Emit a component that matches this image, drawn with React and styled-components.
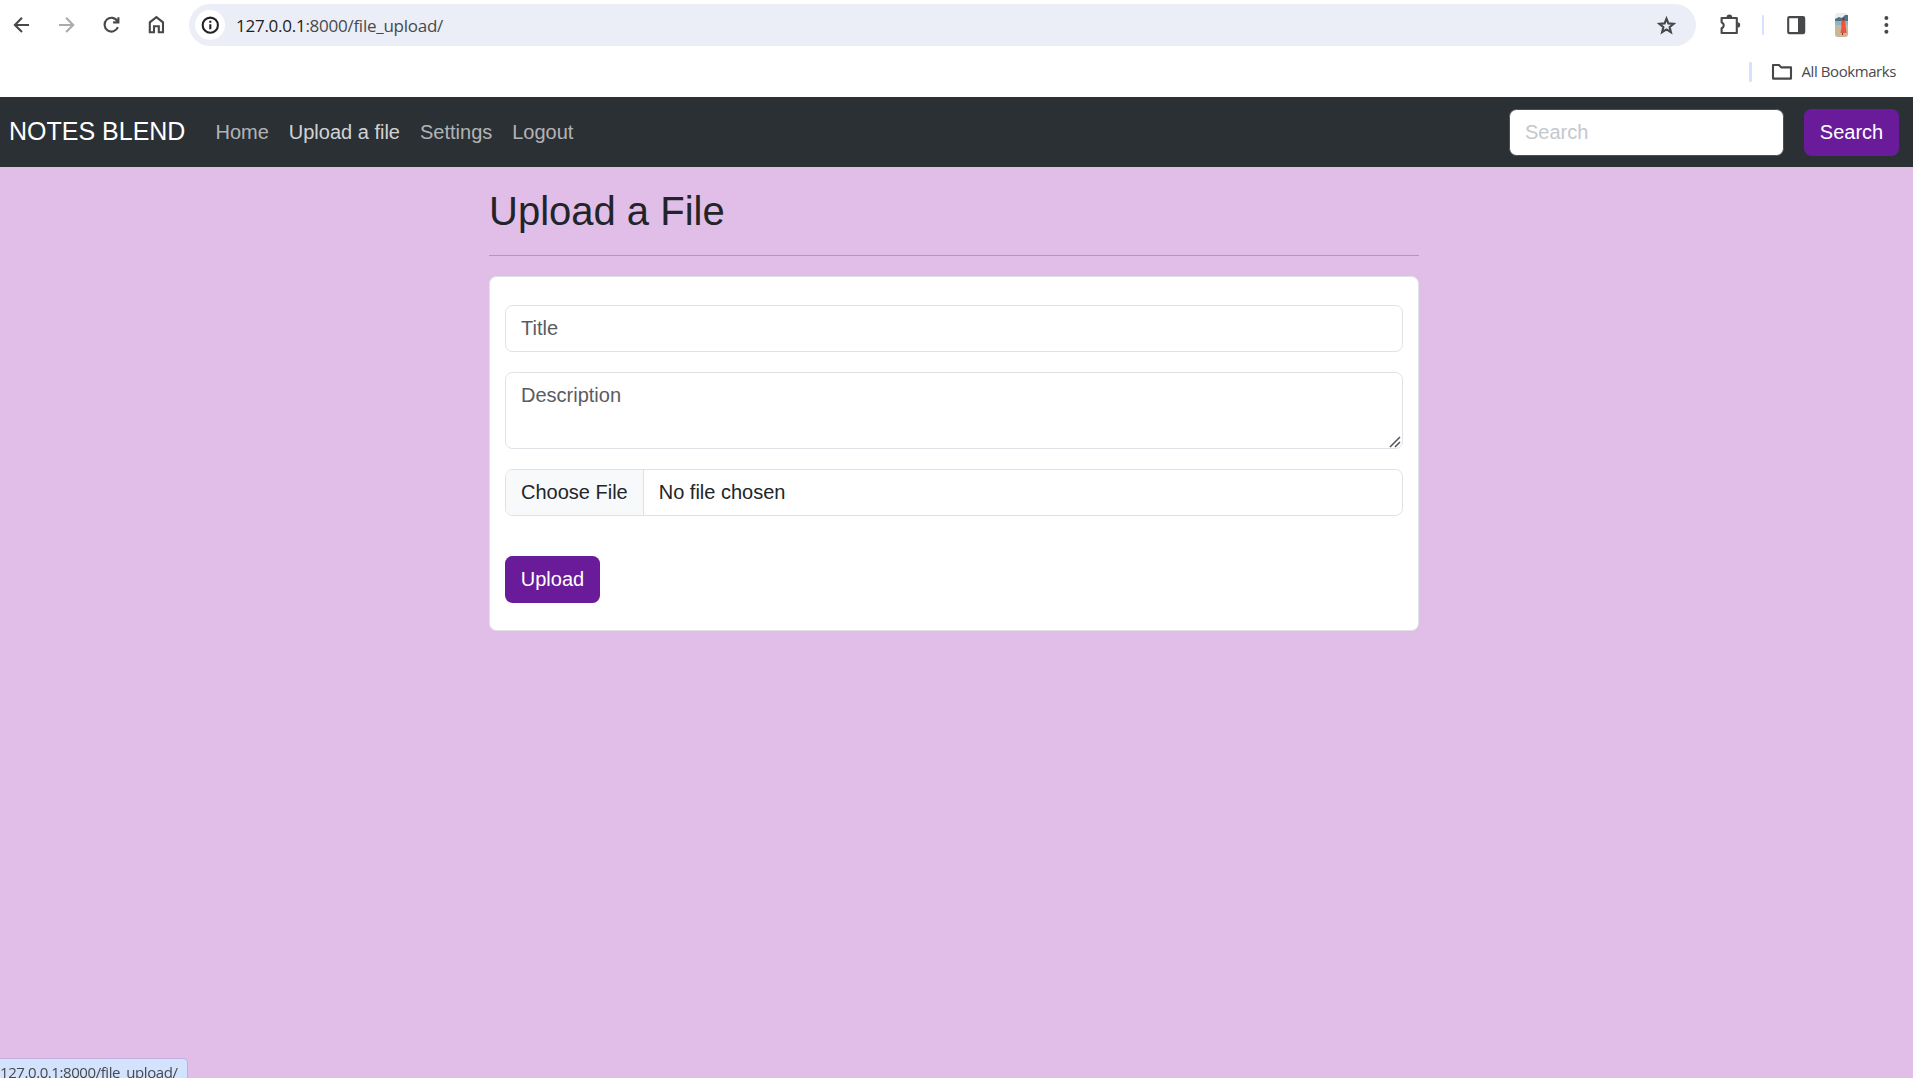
import React from "react";
import styled, { createGlobalStyle } from "styled-components";

const GlobalStyle = createGlobalStyle`
  *, *::before, *::after { box-sizing: border-box; }
  html, body { margin: 0; height: 100%; overflow: hidden; }
  body { background: #e1bee7; color: #212529; font: 20px/1.5 "Liberation Sans", Arial, sans-serif; }
`;

const uiFont = `"Open Sans", "Noto Sans", sans-serif`;

const Window = styled.div`
  height: 1078px;
  display: flex;
  flex-direction: column;
  overflow: hidden;
`;
const Chrome = styled.header`
  height: 97px;
  flex: none;
  background: #fff;
`;
const Toolbar = styled.div`
  height: 50px;
  display: flex;
  align-items: center;
  padding: 0 15px 0 10px;
`;
const NavIcons = styled.div`
  display: flex;
  gap: 21px;
`;
const Icon = styled.svg`
  width: 24px;
  height: 24px;
  flex: none;
  display: block;
  fill: none;
  stroke: ${(p) => p.$color || "#47484a"};
  stroke-width: 2.1;
`;
const AddressBar = styled.div`
  flex: 1;
  height: 42px;
  margin: 0 22px 0 20px;
  padding: 0 18px 0 6px;
  border-radius: 21px;
  background: #ebeef7;
  display: flex;
  align-items: center;
`;
const SiteInfo = styled.span`
  width: 30px;
  height: 30px;
  border-radius: 50%;
  background: #fff;
  display: flex;
  align-items: center;
  justify-content: center;
`;
const Url = styled.span`
  flex: 1;
  margin-left: 11px;
  padding-top: 2px;
  font: 17px/24px ${uiFont};
  letter-spacing: -0.26px;
  color: #47494d;
`;
const Host = styled.span`
  color: #1f2023;
`;
const Divider = styled.span`
  width: ${(p) => p.$width}px;
  height: 20px;
  border-radius: 1px;
  background: #d3e3fd;
`;
const Extras = styled.div`
  display: grid;
  align-items: center;
  grid-template-columns: 44px 22px 51px 39px 24px;
`;
const Avatar = styled.svg`
  width: 13px;
  height: 24px;
  border-radius: 3px;
`;
const Bookmarks = styled.div`
  height: 44px;
  display: flex;
  align-items: center;
  justify-content: flex-end;
  padding-right: 17px;
  font: 15px/20px ${uiFont};
  letter-spacing: -0.42px;
  color: #47494d;
`;
const FolderWrap = styled.span`
  margin: 0 8px 0 18px;
`;
const BookmarksLabel = styled.span`
  padding-bottom: 2px;
`;

const Navbar = styled.nav`
  height: 70px;
  flex: none;
  background: #2b3035;
  display: flex;
  align-items: center;
  padding: 0 14px 0 9px;
`;
const Brand = styled.a`
  font-size: 25px;
  color: #fff;
  margin-right: 20px;
  white-space: nowrap;
`;
const NavLinks = styled.div`
  display: flex;
  flex: 1;
`;
const NavLink = styled.a`
  padding: 10px;
  color: ${(p) => (p.$hover ? "rgba(255,255,255,.8)" : "rgba(255,255,255,.65)")};
`;
const SearchForm = styled.div`
  display: flex;
  gap: 20px;
  align-self: flex-start;
  margin-top: 12px;
`;

const Field = styled.input`
  display: block;
  width: 100%;
  height: 47px;
  padding: 7.5px 15px;
  font: inherit;
  color: #212529;
  background: #fff;
  border: 1px solid #dee2e6;
  border-radius: 7.5px;
  outline: none;
  &::placeholder { color: #595c5f; opacity: 1; }
`;
const SearchField = styled(Field)`
  width: 275px;
  border-color: #495057;
  &::placeholder { color: #c3c8cd; }
`;
const TextAreaWrap = styled.div`
  position: relative;
  margin: 20px 0;
`;
const TextArea = styled(Field)`
  height: 77px;
  padding-top: 6.5px;
  resize: none;
`;
const Grip = styled.svg`
  position: absolute;
  right: 2px;
  bottom: 1px;
  width: 12px;
  height: 12px;
  fill: none;
  stroke: #505255;
  stroke-width: 1.5;
`;
const FileField = styled(Field)`
  overflow: hidden;
  padding: 6.5px 15px 8.5px;
  &::file-selector-button {
    margin: -6.5px 15px -8.5px -15px;
    padding: 6.5px 15px 8.5px;
    font: inherit;
    color: #212529;
    background: #f8f9fa;
    border: 0 solid #dee2e6;
    border-right-width: 1px;
    border-radius: 0;
  }
`;
const Button = styled.button`
  height: 47px;
  width: 95px;
  padding: 0 0 2px;
  font: inherit;
  color: #fff;
  background: #6a1b9a;
  border: 0;
  border-radius: 7.5px;
`;

const Main = styled.main`
  width: 930px;
  margin: 0 auto 0 489px;
  padding-top: 20px;
`;
const Heading = styled.h2`
  margin: 0;
  font-size: 40px;
  line-height: 48px;
  font-weight: 400;
`;
const Rule = styled.hr`
  margin: 20px 0;
  border: 0;
  border-top: 1px solid #212529;
  opacity: 0.25;
`;
const Card = styled.form`
  height: 355px;
  padding: 28px 15px;
  background: #fff;
  border: 1px solid #dee2e6;
  border-radius: 7.5px;
`;
const Actions = styled.div`
  margin-top: 40px;
`;
const StatusBubble = styled.div`
  position: fixed;
  left: -1px;
  bottom: 0;
  width: 189px;
  height: 20px;
  border: 1px solid #c4aede;
  border-bottom: 0;
  border-radius: 0 5px 0 0;
  background: #d3e3fd;
  color: #47494d;
  font: 15px/26px ${uiFont};
  letter-spacing: -0.42px;
  white-space: nowrap;
`;

export default function App() {
  return (
    <Window>
      <GlobalStyle />
      <Chrome>
        <Toolbar>
          <NavIcons>
            <Icon viewBox="0 0 24 24"><path d="M12 4.8 4.9 12l7.1 7.1M5 12h14" /></Icon>
            <Icon viewBox="0 0 24 24" $color="#ababac"><path d="M11.1 4.8 18.2 12l-7.1 7.1M18 12H4" /></Icon>
            <Icon viewBox="0 0 24 24"><path d="M17.5 8.3A6.9 6.9 0 1 0 17.9 14.2M18.4 4.2v5.2h-5.3" /></Icon>
            <Icon viewBox="0 0 24 24"><path d="M4.8 19.3V9.3l6.6-5.1L18 9.3v10h-4.2v-6.1H9v6.1z" /></Icon>
          </NavIcons>
          <AddressBar>
            <SiteInfo>
              <Icon viewBox="0 0 24 24" $color="#202124">
                <circle cx="12.3" cy="12.2" r="7.6" />
                <path d="M12.3 11.2v5M12.3 7.8v2" />
              </Icon>
            </SiteInfo>
            <Url><Host>127.0.0.1</Host>:8000/file_upload/</Url>
            <Icon viewBox="0 0 24 24">
              <path d="m12.5 5.6 1.9 4.8 5.2.4-4 3.3 1.3 5.1-4.4-2.8-4.4 2.8 1.3-5.1-4-3.3 5.2-.4z" />
            </Icon>
          </AddressBar>
          <Extras>
            <Icon viewBox="0 0 24 24">
              <path strokeLinejoin="round" d="M3.6 5h15.2v15H3.6v-4.7c2.9-1.4 2.9-4.6 0-6z" />
              <path stroke="none" fill="#47484a" d="M8.6 4.3a2.8 2.8 0 0 1 5.6 0zM19.4 9.2a2.8 2.8 0 0 1 0 5.6z" />
            </Icon>
            <Divider $width={2} />
            <Icon viewBox="0 0 24 24">
              <rect x="4.2" y="4.1" width="16" height="16" rx="1.2" />
              <path stroke="none" fill="#47484a" d="M14 4h7v16h-7z" />
            </Icon>
            <Avatar viewBox="0 0 13 24">
              <path fill="#e6eef0" d="M0 0h13v24H0z" />
              <path fill="#4f7186" d="M0 6l4-2 3 1 3-3h3v8H0z" />
              <path fill="#8fb4c4" d="M0 8h13v4H0z" />
              <path fill="#c9b79a" d="M0 12h13v12H0z" />
              <path fill="#ef5340" d="m7 7 3 .5.7 6 .8 6.500H5.500l1-6-.5-4z" />
              <path fill="#593f3e" d="M7.500 4.500h1.600v3H7.500zM7 20h1v2H7z" />
            </Avatar>
            <Icon viewBox="0 0 24 24">
              <g stroke="none" fill="#47484a"><circle cx="12.4" cy="5" r="2" /><circle cx="12.4" cy="12" r="2" /><circle cx="12.4" cy="18.8" r="2" /></g>
            </Icon>
          </Extras>
        </Toolbar>
        <Bookmarks>
          <Divider $width={3} />
          <FolderWrap>
            <Icon viewBox="0 0 24 24"><path strokeLinejoin="round" d="M3 5h6l2.2 2.4H21v11.2H3z" /></Icon>
          </FolderWrap>
          <BookmarksLabel>All Bookmarks</BookmarksLabel>
        </Bookmarks>
      </Chrome>
      <Navbar>
        <Brand>NOTES BLEND</Brand>
        <NavLinks>
          <NavLink>Home</NavLink>
          <NavLink $hover>Upload a file</NavLink>
          <NavLink>Settings</NavLink>
          <NavLink>Logout</NavLink>
        </NavLinks>
        <SearchForm>
          <SearchField placeholder="Search" />
          <Button type="button">Search</Button>
        </SearchForm>
      </Navbar>
      <Main>
        <Heading>Upload a File</Heading>
        <Rule />
        <Card>
          <Field placeholder="Title" />
          <TextAreaWrap>
            <TextArea as="textarea" placeholder="Description" />
            <Grip viewBox="0 0 12 12"><path d="M1 11 11 1M6 11l5-5" /></Grip>
          </TextAreaWrap>
          <FileField type="file" />
          <Actions><Button type="button">Upload</Button></Actions>
        </Card>
      </Main>
      <StatusBubble>127.0.0.1:8000/file_upload/</StatusBubble>
    </Window>
  );
}
